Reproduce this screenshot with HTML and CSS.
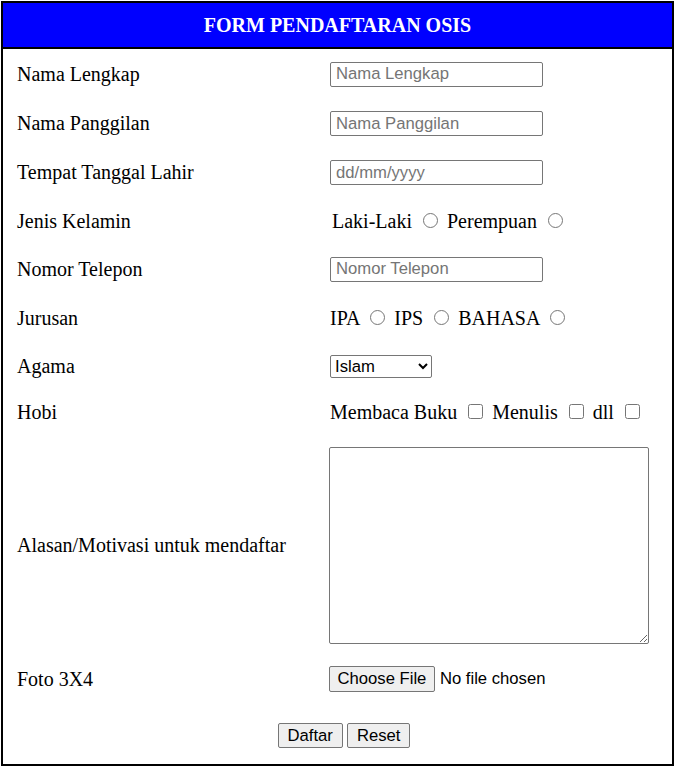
FILE: index.html
```html
<!DOCTYPE html>
<html lang="id">
<head>
<meta charset="utf-8">
<title>Form Pendaftaran OSIS</title>
<link rel="stylesheet" href="styles.css">
</head>
<body>
<form class="form">
  <h1 class="title">FORM PENDAFTARAN OSIS</h1>

  <label class="label" for="nama">Nama Lengkap</label>
  <div class="field"><input class="text" id="nama" type="text" placeholder="Nama Lengkap"></div>

  <label class="label" for="panggilan">Nama Panggilan</label>
  <div class="field"><input class="text" id="panggilan" type="text" placeholder="Nama Panggilan"></div>

  <label class="label" for="ttl">Tempat Tanggal Lahir</label>
  <div class="field"><input class="text" id="ttl" type="text" placeholder="dd/mm/yyyy"></div>

  <div class="label">Jenis Kelamin</div>
  <div class="field choices indent">Laki-Laki <input type="radio" name="jk"> Perempuan <input type="radio" name="jk"></div>

  <label class="label" for="telp">Nomor Telepon</label>
  <div class="field"><input class="text" id="telp" type="text" placeholder="Nomor Telepon"></div>

  <div class="label">Jurusan</div>
  <div class="field choices">IPA <input type="radio" name="jur"> IPS <input type="radio" name="jur"> BAHASA <input type="radio" name="jur"></div>

  <label class="label" for="agama">Agama</label>
  <div class="field">
    <select class="select" id="agama">
      <option>Islam</option>
      <option>Kristen</option>
      <option>Katolik</option>
      <option>Hindu</option>
      <option>Buddha</option>
    </select>
  </div>

  <div class="label">Hobi</div>
  <div class="field choices">Membaca Buku <input type="checkbox"> Menulis <input type="checkbox"> dll <input type="checkbox"></div>

  <label class="label" for="alasan">Alasan/Motivasi untuk mendaftar</label>
  <div class="field"><textarea class="area" id="alasan"></textarea></div>

  <label class="label" for="foto">Foto 3X4</label>
  <div class="field"><input class="file" id="foto" type="file"></div>

  <div class="actions">
    <button class="btn" type="submit">Daftar</button>
    <button class="btn" type="reset">Reset</button>
  </div>
</form>
</body>
</html>
```
FILE: styles.css
```css
html, body {
  margin: 0;
  padding: 0;
  background: #ffffff;
}

body {
  font-family: "Liberation Serif", "Times New Roman", serif;
  color: #000000;
}

.form {
  box-sizing: border-box;
  margin: 1px;
  width: 673px;
  height: 765px;
  border: 2px solid #000000;
  display: grid;
  grid-template-columns: 327px 1fr;
  grid-template-rows: 46px 50px 49px 49px 48px 48px 50px 46px 46px 221px 46px 1fr;
}

.title {
  grid-column: 1 / -1;
  margin: 0;
  background: #0000ff;
  color: #ffffff;
  border-bottom: 2px solid #000000;
  font-size: 20px;
  font-weight: bold;
  display: flex;
  align-items: center;
  justify-content: center;
}

.label {
  display: flex;
  align-items: center;
  padding-left: 14px;
  font-size: 20px;
}

.field {
  display: flex;
  align-items: center;
  font-size: 20px;
}

.choices {
  display: block;
  align-self: center;
  white-space: nowrap;
}

.indent {
  padding-left: 2px;
}

.choices input {
  margin: 3px 4px 0 6px;
  width: 15px;
  height: 15px;
}

.text {
  box-sizing: border-box;
  width: 213px;
  height: 25px;
  margin: 0;
  padding: 1px 5px;
  border: 1px solid #767676;
  border-radius: 2px;
  font-family: "Liberation Sans", Arial, sans-serif;
  font-size: 16.67px;
}

.text::placeholder {
  color: #757575;
}

.select {
  box-sizing: border-box;
  width: 102px;
  height: 23px;
  margin: 0;
  font-family: "Liberation Sans", Arial, sans-serif;
  font-size: 16.67px;
  border: 1px solid #767676;
  border-radius: 2px;
  background: #ffffff;
  color: #000000;
}

.area {
  box-sizing: border-box;
  width: 320px;
  height: 197px;
  margin: 0 0 0 -1px;
  border: 1px solid #767676;
  border-radius: 2px;
}

.file {
  margin: 0 0 0 -1px;
  font-family: "Liberation Sans", Arial, sans-serif;
  font-size: 16.67px;
}

.file::file-selector-button {
  padding: 2px 7.5px;
  margin-right: 5px;
  border: 1px solid #767676;
  border-radius: 2px;
  background: #efefef;
  color: #000000;
}

.actions {
  grid-column: 1 / -1;
  display: flex;
  justify-content: center;
  align-items: flex-start;
  gap: 4px;
  padding: 21px 0 0 13px;
}

.btn {
  box-sizing: border-box;
  height: 25px;
  margin: 0;
  padding: 1px 9px;
  border: 1px solid #767676;
  border-radius: 2px;
  background: #efefef;
  font-family: "Liberation Sans", Arial, sans-serif;
  font-size: 16.67px;
  color: #000000;
}
```
